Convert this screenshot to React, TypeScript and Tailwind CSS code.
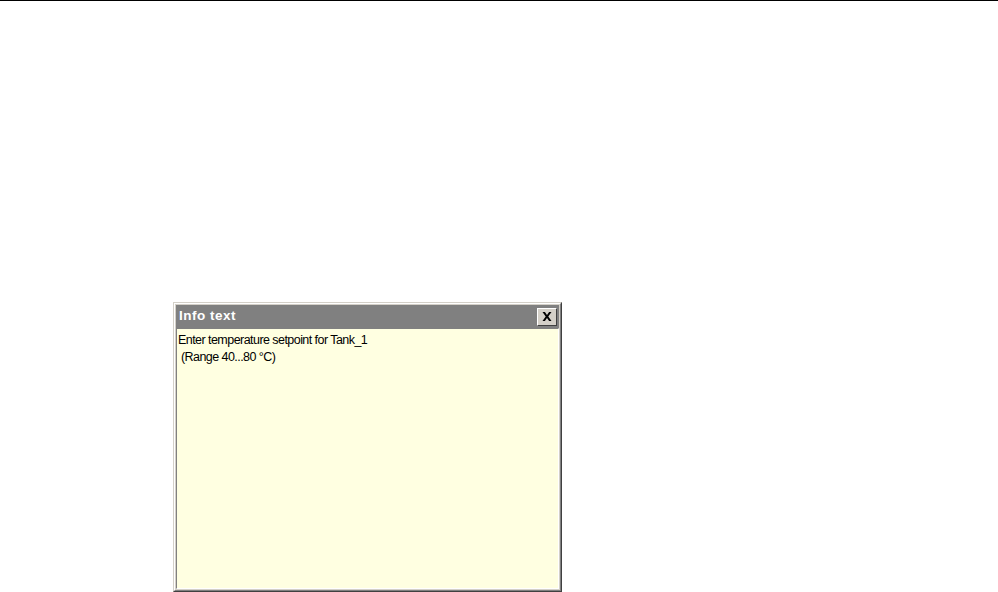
import React from "react";

const InfoWindow: React.FC = () => {
  return (
    <div className="ml-[173px] mt-[301px] flex w-[389px] flex-1 flex-col border border-t-[#d4d0c8] border-l-[#d4d0c8] border-r-[#404040] border-b-[#404040] bg-[#d4d0c8]">
      <div className="flex flex-1 flex-col border border-t-white border-l-white border-r-[#808080] border-b-[#808080] p-px">
        {/* Title bar */}
        <div className="flex h-[23px] items-center justify-between bg-[#808080] pl-[3px] pr-[2px]">
          <span className="text-[13.5px] font-bold tracking-[0.5px] text-white">Info text</span>
          <button className="flex h-[18px] w-[20px] items-center justify-center border border-t-white border-l-white border-r-[#404040] border-b-[#404040] bg-[#d4d0c8]">
            <svg width="10" height="9" viewBox="0 0 10 9">
              <path d="M0.5 0h2.4l2.1 2.9L7.1 0h2.4L6.3 4.5 9.5 9H7.1L5 6.1 2.9 9H0.5l3.2-4.5z" fill="#000" />
            </svg>
          </button>
        </div>
        {/* Content */}
        <div className="flex-1 border border-t-[#808080] border-l-[#808080] border-r-white border-b-white bg-[#ffffe1] px-[1px] pt-[3px] text-[12.5px] leading-[17px] tracking-[-0.55px] text-black">
          <div>Enter temperature setpoint for Tank_1</div>
          <div className="whitespace-pre"> (Range 40...80 °C)</div>
        </div>
      </div>
    </div>
  );
};

export default function App() {
  return (
    <div
      className="flex h-[592px] w-[998px] flex-col overflow-hidden border-t border-black bg-white"
      style={{ fontFamily: "'Liberation Sans', Arial, sans-serif" }}
    >
      <InfoWindow />
    </div>
  );
}
